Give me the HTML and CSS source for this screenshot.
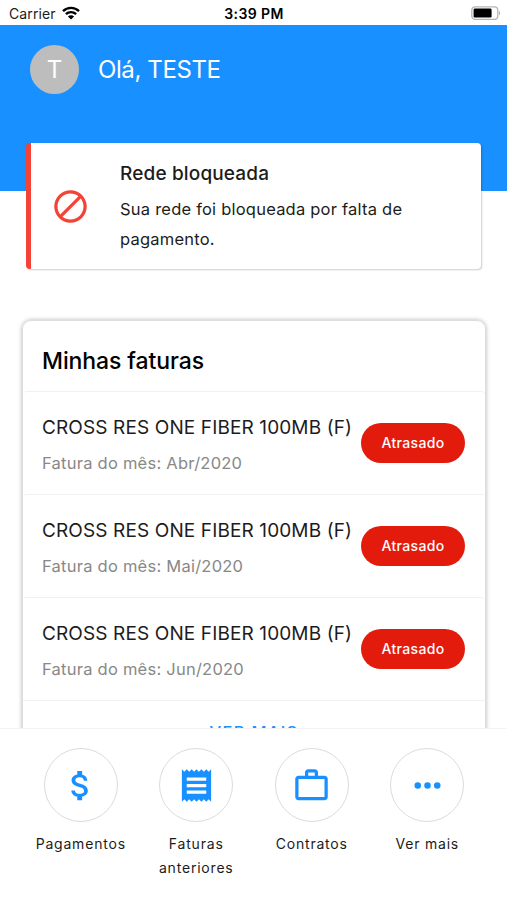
FILE: index.html
```html
<!DOCTYPE html>
<html lang="pt-BR">
<head>
  <meta charset="UTF-8">
  <meta name="viewport" content="width=device-width, initial-scale=1.0">
  <title>Minhas faturas</title>
  <link rel="stylesheet" href="styles.css">
</head>
<body>
  <div class="status-bar">
    <div class="carrier">
      <span>Carrier</span>
      <svg class="wifi" viewBox="0 0 18 14">
        <path d="M1 5.2a11.4 11.4 0 0 1 16 0" />
        <path d="M3.9 8.2a7.2 7.2 0 0 1 10.2 0" />
        <path class="wifi-dot" d="M9 13.6L5.9 10.5a4.4 4.4 0 0 1 6.2 0z" />
      </svg>
    </div>
    <div class="clock">3:39 PM</div>
    <svg class="battery" viewBox="0 0 30 14">
      <rect class="battery-case" x="0.8" y="0.8" width="26" height="12.6" rx="3.4" />
      <rect x="2.6" y="2.6" width="18" height="9" rx="1.4" />
      <path class="battery-tip" d="M28 4.8c1.6.8 1.6 3.8 0 4.6z" />
    </svg>
  </div>

  <header class="header">
    <div class="avatar">T</div>
    <h1>Olá, TESTE</h1>
  </header>

  <main class="content">
    <section class="alert">
      <svg class="icon" viewBox="0 0 24 24"><path d="M12 2C6.480 2 2 6.480 2 12s4.480 10 10 10 10-4.480 10-10S17.520 2 12 2zM4 12c0-4.420 3.580-8 8-8 1.850 0 3.550.630 4.900 1.690L5.690 16.900C4.630 15.550 4 13.850 4 12zm8 8c-1.850 0-3.550-.630-4.900-1.690L18.310 7.100C19.370 8.450 20 10.150 20 12c0 4.420-3.580 8-8 8z"/></svg>
      <div class="alert-text">
        <h2>Rede bloqueada</h2>
        <p>Sua rede foi bloqueada por falta de pagamento.</p>
      </div>
    </section>

    <section class="invoices">
      <h2>Minhas faturas</h2>
      <div class="invoice">
        <div>
          <h3>CROSS RES ONE FIBER 100MB (F)</h3>
          <p>Fatura do mês: Abr/2020</p>
        </div>
        <span class="badge">Atrasado</span>
      </div>
      <div class="invoice">
        <div>
          <h3>CROSS RES ONE FIBER 100MB (F)</h3>
          <p>Fatura do mês: Mai/2020</p>
        </div>
        <span class="badge">Atrasado</span>
      </div>
      <div class="invoice">
        <div>
          <h3>CROSS RES ONE FIBER 100MB (F)</h3>
          <p>Fatura do mês: Jun/2020</p>
        </div>
        <span class="badge">Atrasado</span>
      </div>
      <a class="more">VER MAIS</a>
    </section>
  </main>

  <nav class="nav">
    <a class="nav-item">
      <span class="circle"><svg class="icon" viewBox="0 0 24 24"><path d="M11.800 10.900c-2.270-.590-3-1.200-3-2.150 0-1.090 1.010-1.850 2.700-1.850 1.780 0 2.440.850 2.500 2.100h2.210c-.070-1.720-1.120-3.300-3.210-3.810V3h-3v2.160c-1.940.420-3.500 1.680-3.500 3.610 0 2.310 1.910 3.460 4.700 4.130 2.500.600 3 1.480 3 2.410 0 .690-.490 1.790-2.700 1.790-2.060 0-2.870-.920-2.980-2.100h-2.200c.120 2.190 1.760 3.420 3.680 3.830V21h3v-2.150c1.950-.370 3.500-1.500 3.500-3.550 0-2.840-2.430-3.810-4.700-4.400z"/></svg></span>
      <span>Pagamentos</span>
    </a>
    <a class="nav-item">
      <span class="circle"><svg class="icon" viewBox="0 0 24 24"><path d="M18 17H6v-2h12v2zm0-4H6v-2h12v2zm0-4H6V7h12v2zM3 22l1.500-1.500L6 22l1.500-1.500L9 22l1.500-1.500L12 22l1.500-1.500L15 22l1.500-1.500L18 22l1.500-1.500L21 22V2l-1.500 1.500L18 2l-1.500 1.500L15 2l-1.500 1.500L12 2l-1.500 1.500L9 2 7.500 3.500 6 2 4.500 3.500 3 2v20z"/></svg></span>
      <span>Faturas anteriores</span>
    </a>
    <a class="nav-item">
      <span class="circle"><svg class="icon" viewBox="0 0 24 24"><path d="M14 6V4h-4v2h4zM4 8v11h16V8H4zm16-2c1.110 0 2 .890 2 2v11c0 1.110-.890 2-2 2H4c-1.110 0-2-.890-2-2V8c0-1.110.890-2 2-2h4V4c0-1.110.890-2 2-2h4c1.110 0 2 .890 2 2v2h4z"/></svg></span>
      <span>Contratos</span>
    </a>
    <a class="nav-item">
      <span class="circle"><svg class="icon" viewBox="0 0 24 24"><circle cx="6" cy="12" r="2"/><circle cx="12" cy="12" r="2"/><circle cx="18" cy="12" r="2"/></svg></span>
      <span>Ver mais</span>
    </a>
  </nav>
</body>
</html>
```
FILE: styles.css
```css
* { box-sizing: border-box; }
body { font-family: Inter, "Liberation Sans", sans-serif; margin: 0; height: 900px; overflow: hidden; display: flex; flex-direction: column; background: #fff; color: #1c1c1c; }
h1, h2, h3, p { margin: 0; font-weight: 400; }
.icon { width: 39px; height: 39px; fill: currentColor; display: block; }

.status-bar { display: grid; grid-template-columns: 1fr auto 1fr; align-items: center; height: 25px; flex: none; padding: 2px 6px 0 9px; font-size: 14px; }
.carrier { display: flex; align-items: center; gap: 6px; letter-spacing: 0.1px; }
.wifi { width: 18px; height: 14px; margin-top: -2px; fill: none; stroke: #000; stroke-width: 2.4; }
.wifi .wifi-dot { fill: #000; stroke: none; }
.clock { margin-left: -2px; font-weight: 600; letter-spacing: 0.4px; color: #000; }
.battery { width: 30px; height: 14px; margin: -2px 0 0; justify-self: end; }
.battery-case { fill: none; stroke: #b5b5b5; stroke-width: 1.3; }
.battery-tip { fill: #b5b5b5; }

.header { display: flex; align-items: flex-start; flex: none; height: 166px; padding: 20px 30px; background: #1890ff; color: #fff; }
.avatar { width: 49px; height: 49px; border-radius: 50%; background: #bdbdbd; font-size: 24px; line-height: 50px; text-align: center; }
.header h1 { margin-left: 19px; font-size: 24px; line-height: 49px; letter-spacing: -0.4px; }

.content { flex: 1; min-height: 0; overflow: hidden; margin-top: -48px; padding: 0 21px; }
.alert { display: flex; align-items: center; height: 126px; margin: 0 5px; padding-left: 20px; background: #fff; border-left: 5px solid #f44336; border-radius: 4px; box-shadow: 1px 1px 2px rgba(0,0,0,0.2); color: #f44336; }
.alert-text { width: 310px; margin-left: 30px; padding-top: 3px; color: #1c1c1c; }
.alert h2 { font-size: 19px; line-height: 26px; font-weight: 450; letter-spacing: 0.15px; margin-bottom: 8px; }
.alert p { font-size: 16.5px; line-height: 29.5px; letter-spacing: 0.22px; }

.invoices { height: 460px; margin: 51px 0 0 1px; border: 1px solid #ddd; border-radius: 9px; box-shadow: 0 0 4px rgba(0,0,0,0.3); }
.invoices h2 { height: 70px; padding-left: 19px; font-size: 23px; line-height: 81px; font-weight: 500; letter-spacing: -0.1px; color: #000; }
.invoice { display: flex; justify-content: space-between; align-items: center; height: 103px; padding: 0 20px 0 19px; border-top: 1px solid #f1f1f1; border-radius: 4px; }
.invoice h3 { padding-top: 3px; font-size: 19px; line-height: 28px; letter-spacing: 0.12px; white-space: nowrap; }
.invoice p { margin-top: 8px; font-size: 16.5px; line-height: 26px; letter-spacing: 0.24px; color: #888; }
.badge { width: 104px; height: 40px; flex: none; border-radius: 20px; background: #e31b0c; color: #fff; font-size: 14px; font-weight: 500; line-height: 40px; letter-spacing: 0.35px; text-align: center; }
.more { display: block; padding-top: 19px; border-top: 1px solid #f1f1f1; color: #1890ff; font-size: 16.5px; font-weight: 500; line-height: 24px; letter-spacing: 1.3px; text-align: center; }

.nav { display: grid; grid-template-columns: repeat(4, 1fr); flex: none; height: 172px; padding: 19px 22px 0 23px; border-top: 1px solid #f3f3f3; background: #fff; }
.nav-item { display: flex; flex-direction: column; align-items: center; padding: 0 12px; font-size: 14px; line-height: 24px; text-align: center; letter-spacing: 0.8px; }
.circle { display: flex; align-items: center; justify-content: center; width: 74px; height: 74px; margin-bottom: 10px; border: 1px solid #dcdcdc; border-radius: 50%; color: #1890ff; }
```
